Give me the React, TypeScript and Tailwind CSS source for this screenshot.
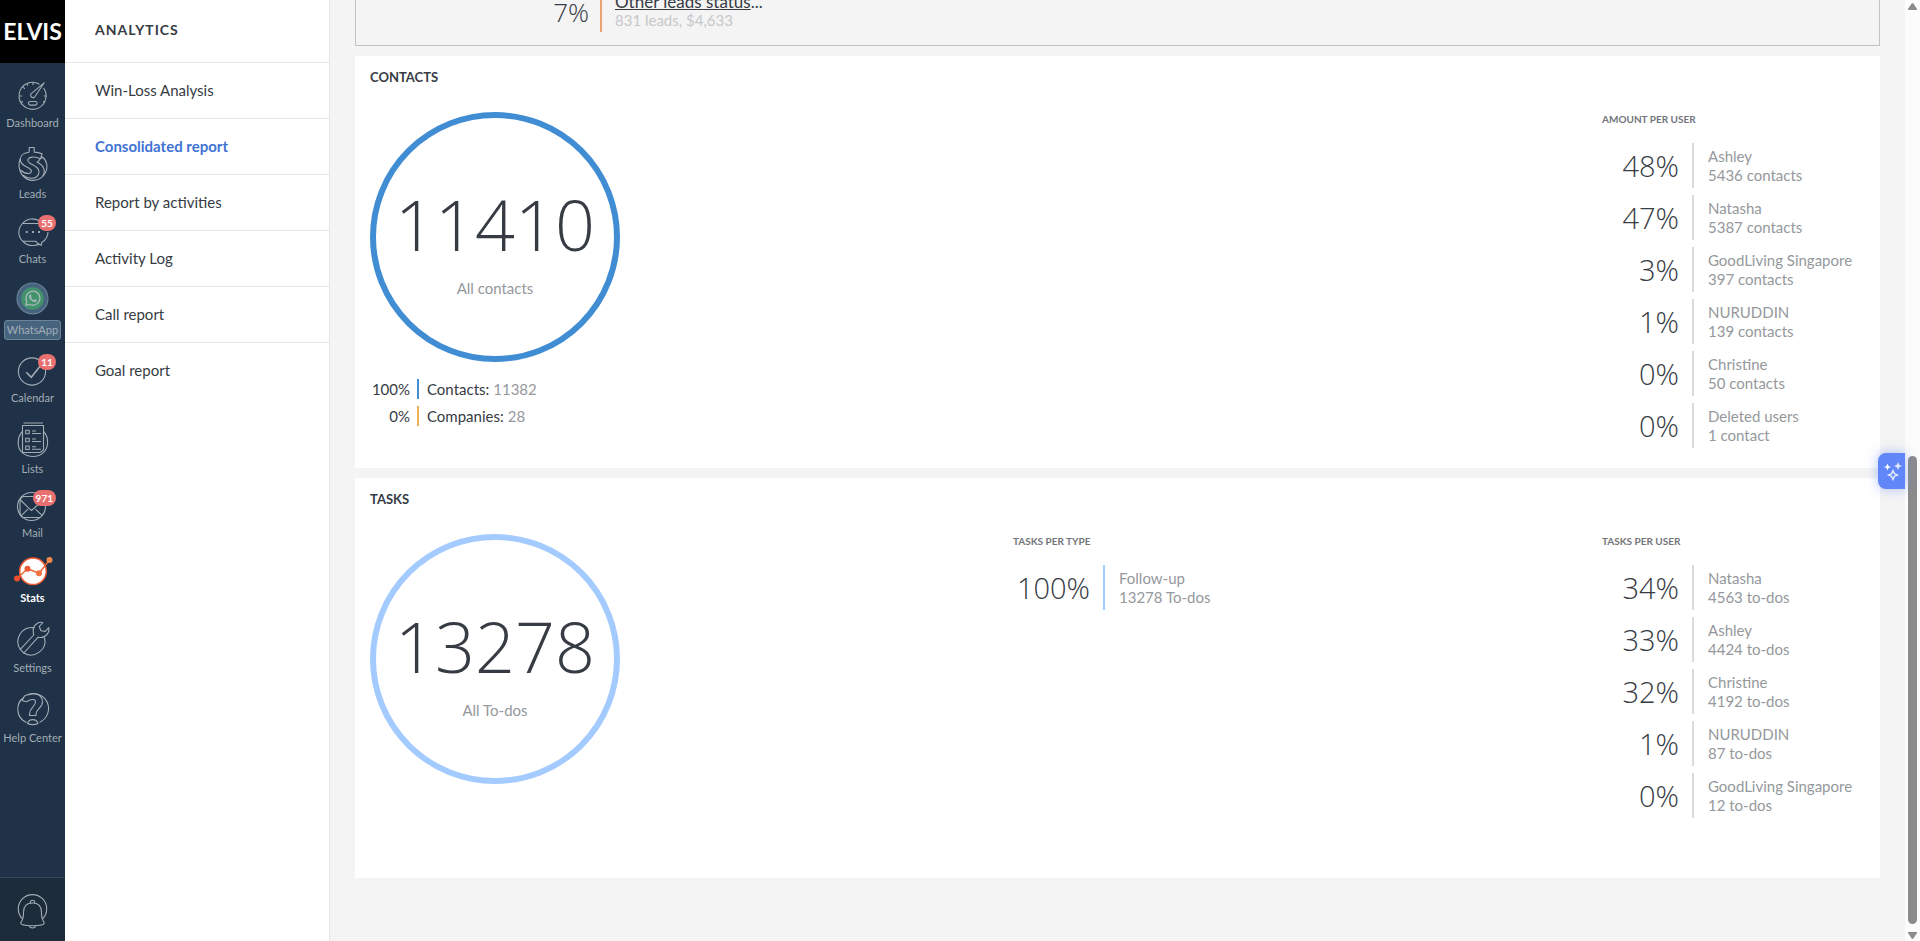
import type { ReactNode } from 'react'
import clsx from 'clsx'

type NavItem = {
  label: string
  icon: ReactNode
  badge?: string
  active?: boolean
  boxed?: boolean
}

type Stat = {
  percent: string
  name: string
  amount: string
}

function LineIcon({ height, children }: { height: number; children: ReactNode }) {
  return (
    <svg
      width="33"
      height={height}
      viewBox={`0 0 33 ${height}`}
      fill="none"
      stroke="currentColor"
      strokeWidth="1.1"
      strokeLinejoin="round"
      className="overflow-visible"
      aria-hidden="true"
    >
      {children}
    </svg>
  )
}

const icons = {
  dashboard: (
    <LineIcon height={29}>
      <path d="M23.5 3.2A13.5 13.5 0 1 0 27.6 7" />
      <path d="M28.2 1.8 15.2 12.6a2.4 2.4 0 1 0 3.6 3.2Z" />
      <rect x="12.5" y="20.5" width="8.5" height="3.6" rx="1.6" />
      <path d="M17 1.5v2.6M3.5 15h2.6M30.5 15h-2.6M7.2 6.2l1.6 1.6M5 21.5l2-1M29 21.5l-2-1M11 3l.8 1.8" />
    </LineIcon>
  ),
  leads: (
    <LineIcon height={34}>
      <path d="M13.2 5.2V.5h5v4.600c3 0 5.500.6 7.800 1.700l-1.500 5c-3-1.400-6-2-8.500-1.700-4.500.5-5.500 3.600-2.500 5.900 3.500 2.500 9.500 3.500 9.500 9 0 4-3.500 6.500-7.500 6.300-3.500-.1-6.500-1.300-9-3.300" />
      <path d="M13.200 5.200C8 5.700 4.300 8.500 4.300 12.500c0 5 4.700 6.500 8.700 8.700 4 2.300 2.500 5.300-.5 5.300-3 0-6-1.500-8.200-3.500" />
      <path d="M4.500 11C2 16.500 2.500 23.500 6.500 28.300c5.500 6.700 15.500 6.700 21 .2 5-6 4.500-13.500-1-18.500l-2 1.800" />
      <path d="M24 12c-.8 1.500-1.700 2.500-2.900 3.300 7 3 8.900 9 5.400 14.200" />
    </LineIcon>
  ),
  chats: (
    <LineIcon height={28}>
      <path d="M6.500 5.500C10.500.4 18.500-.8 24.500 3.500M32 14c0 5-2.800 8.400-6.500 10.700v2.600c-2.400-.4-4.500-1.800-5.700-4H7C9.800 26.500 13 27.700 17 27.500c2.500 0 5-.6 7-1.500" />
      <path d="M23 5.500H6.500C1.500 11 1.500 18.500 7 23.300" />
      <path d="M9.800 14h1.900M16.100 14H18M22.100 14H24" strokeWidth="2" />
    </LineIcon>
  ),
  whatsapp: (
    <LineIcon height={31}>
      <circle cx="16.500" cy="15.500" r="15.500" fill="#47647f" stroke="#6c8398" />
      <circle cx="16.500" cy="15.500" r="11.300" fill="#42936b" stroke="none" />
      <path d="m9.800 22.300 1-3.700a7 7 0 1 1 2.700 2.700Z" stroke="#a6b7b8" strokeWidth="1.300" />
      <path
        d="M13.600 11.900c.5-.6 1.200-.5 1.500.2l.5 1.200c.1.500-.7 1-.6 1.300.6 1.200 1.500 2.100 2.800 2.600.5.100.9-1.100 1.400-.9l1.500.8c.5.500-.1 1.700-1.100 2-3 .6-7.200-3.500-6.700-6 .1-.5.400-.9.700-1.200Z"
        fill="#a6b7b8"
        stroke="none"
      />
    </LineIcon>
  ),
  calendar: (
    <LineIcon height={28}>
      <circle cx="16" cy="14.500" r="13.600" />
      <path d="m10.300 15.300 5 5L25 8" strokeWidth="1.500" strokeLinejoin="miter" />
    </LineIcon>
  ),
  lists: (
    <LineIcon height={34}>
      <path d="M6.500 3.500h21v24.200c-1 1.200-2 2-3.400 2.800H6.500ZM7.500 1h19.500" />
      <path d="M6.500 9.500C.8 15 .8 26 6.300 30.600c6 5.200 15.500 5.200 21 0C33 25.500 33 15 27.500 9.500" />
      <path d="M9.700 8.300h3.500v3.500H9.700zM9.700 16.300h3.500v3.500H9.700zM9.700 24h3.500v3.500H9.700zM16 9h4M16 11.500h9M16 17h4M16 19.500h9M16 24.700h4M16 27.200h9" />
    </LineIcon>
  ),
  mail: (
    <LineIcon height={27}>
      <circle cx="15.500" cy="13.500" r="14" />
      <path d="M7 3.500h14M4.500 7l7 6.800M15.500 17.500 27 7M11.500 13.800l4 3.700M5.500 22.300l6.500-6.200M26 22.300l-6.600-6.200M7 24.500h17M7 3.500C4.500 5 4 6.500 4 8v12c0 2 1 3.500 3 4.500" />
    </LineIcon>
  ),
  stats: (
    <LineIcon height={28}>
      <circle cx="17" cy="14.300" r="13.300" fill="#fff" stroke="#ef5a35" strokeWidth="1.500" />
      <path d="m1 21.500 10.500-9.700L23 16.200 33.500 3" stroke="#f0683a" strokeWidth="1.500" />
      <circle cx="1" cy="21.500" r="3" fill="#f04e2e" stroke="none" />
      <circle cx="11.500" cy="11.800" r="3" fill="#f05a33" stroke="none" />
      <circle cx="23" cy="16.200" r="3" fill="#f17240" stroke="none" />
      <circle cx="33.500" cy="3" r="3" fill="#f28a4b" stroke="none" />
    </LineIcon>
  ),
  settings: (
    <LineIcon height={33}>
      <path d="M17 5.600A14 14 0 0 0 4.300 27.400M28.500 15.500A14 14 0 0 1 7.800 31M17.500 5.600l1.200-.1" />
      <path d="M4.300 27.400 17.700 13c-1.200-4.700-.2-9.500 4-12 2-.9 3.600-.9 5.100-.5l-3.500 4 1.600 4.300 4.400.6 3.400-3.700c.6 2.400-.3 5.400-2.200 7.300-2.300 2.300-5.400 3-8.300 2.200L7.800 31Z" />
    </LineIcon>
  ),
  help: (
    <LineIcon height={33}>
      <path d="M10.500 30.500A14.500 14.500 0 0 1 8 5.300M12 2.900a14.500 14.500 0 1 1 11.500 27.300" />
      <path d="M6 8.500 8.500 4l3.500-1.500c8-2.500 14.500.5 14.500 7.500 0 5.500-6.500 7-6.500 12v1.500h-6.500V22c0-6.500 6-7.500 6-12 0-3-4-3.500-9-.2Z" />
      <path d="M11.500 31.500a5.500 5.500 0 0 1 10.500 0c-3 1.300-7.500 1.300-10.500 0Z" />
    </LineIcon>
  ),
  bell: (
    <LineIcon height={35}>
      <path d="M6.300 24.700a14.200 14.200 0 1 1 20.400 0" />
      <path d="M16.500 9c-6 0-8.700 3.800-8.900 8.500-.2 6.500-.6 7.500-2.900 11.500 0 1.800 5.600 2.700 11.800 2.700s11.800-.9 11.800-2.700c-2.300-4-2.700-5-2.900-11.500C25.200 12.800 22.500 9 16.500 9ZM14.300 9.200a2.300 2.300 0 1 1 4.400 0M13 31.700a3.800 3.800 0 0 0 7 0" />
    </LineIcon>
  ),
}

const navItems: NavItem[] = [
  { label: 'Dashboard', icon: icons.dashboard },
  { label: 'Leads', icon: icons.leads },
  { label: 'Chats', icon: icons.chats, badge: '55' },
  { label: 'WhatsApp', icon: icons.whatsapp, boxed: true },
  { label: 'Calendar', icon: icons.calendar, badge: '11' },
  { label: 'Lists', icon: icons.lists },
  { label: 'Mail', icon: icons.mail, badge: '971' },
  { label: 'Stats', icon: icons.stats, active: true },
  { label: 'Settings', icon: icons.settings },
  { label: 'Help Center', icon: icons.help },
]

const reports = [
  'Win-Loss Analysis',
  'Consolidated report',
  'Report by activities',
  'Activity Log',
  'Call report',
  'Goal report',
]

const contactsPerUser: Stat[] = [
  { percent: '48%', name: 'Ashley', amount: '5436 contacts' },
  { percent: '47%', name: 'Natasha', amount: '5387 contacts' },
  { percent: '3%', name: 'GoodLiving Singapore', amount: '397 contacts' },
  { percent: '1%', name: 'NURUDDIN', amount: '139 contacts' },
  { percent: '0%', name: 'Christine', amount: '50 contacts' },
  { percent: '0%', name: 'Deleted users', amount: '1 contact' },
]

const tasksPerType: Stat[] = [
  { percent: '100%', name: 'Follow-up', amount: '13278 To-dos' },
]

const tasksPerUser: Stat[] = [
  { percent: '34%', name: 'Natasha', amount: '4563 to-dos' },
  { percent: '33%', name: 'Ashley', amount: '4424 to-dos' },
  { percent: '32%', name: 'Christine', amount: '4192 to-dos' },
  { percent: '1%', name: 'NURUDDIN', amount: '87 to-dos' },
  { percent: '0%', name: 'GoodLiving Singapore', amount: '12 to-dos' },
]

function NavRail() {
  return (
    <nav className="flex w-[65px] shrink-0 flex-col bg-[#203247] text-[#a3adb6]">
      <a
        href="#home"
        className="flex h-[63px] items-center justify-center bg-black text-[23px] font-bold text-white"
      >
        ELVIS
      </a>
      <ul className="flex flex-col gap-[17px] pt-[18px]">
        {navItems.map((item) => (
          <li key={item.label}>
            <a
              href={`#${item.label}`}
              className="flex flex-col items-center gap-1.5 text-[11px] leading-[14px] whitespace-nowrap"
            >
              <span className="relative">
                {item.icon}
                {item.badge && (
                  <span className="absolute -top-[3px] -right-[7px] flex h-4 min-w-[18px] items-center justify-center rounded-full bg-[#e97070] px-[3px] text-[10px] font-bold text-white">
                    {item.badge}
                  </span>
                )}
              </span>
              <span
                className={clsx(
                  item.active && 'font-bold text-white',
                  item.boxed &&
                    'rounded-[3px] border border-[#6c8398] bg-[#47647f] px-0.5 py-0.5',
                )}
              >
                {item.label}
              </span>
            </a>
          </li>
        ))}
      </ul>
      <button
        type="button"
        aria-label="Notifications"
        className="mt-auto flex h-16 items-center justify-center border-t border-[#2c4a58] bg-[#1d2c3a] pt-1"
      >
        {icons.bell}
      </button>
    </nav>
  )
}

function ReportMenu() {
  return (
    <aside className="w-[265px] shrink-0 border-r border-[#e5e6e7] bg-white text-[#363b44]">
      <h1 className="flex h-[62px] items-center pb-0.5 pl-[30px] text-sm font-bold tracking-[1px]">
        ANALYTICS
      </h1>
      <ul>
        {reports.map((report) => (
          <li key={report} className="border-t border-[#e5e6e7]">
            <a
              href={`#${report}`}
              className={clsx(
                'flex h-[55px] items-center pl-[30px]',
                report === 'Consolidated report' && 'font-bold text-[#3f73d3]',
              )}
            >
              {report}
            </a>
          </li>
        ))}
      </ul>
    </aside>
  )
}

function StatList({
  title,
  stats,
  className,
  barClassName = 'border-[#dadbdd]',
}: {
  title: string
  stats: Stat[]
  className: string
  barClassName?: string
}) {
  return (
    <div className={className}>
      <h3 className="text-[10px] leading-[14px] font-bold text-[#72757b]">{title}</h3>
      <ul className="mt-[17px] flex flex-col gap-[7px]">
        {stats.map((stat) => (
          <li key={stat.name} className="flex h-[45px] items-center whitespace-nowrap">
            <span className="w-[77px] shrink-0 text-right font-['Open_Sans',sans-serif] text-[29px] leading-9 font-light text-[#363b44]">
              {stat.percent}
            </span>
            <div
              className={clsx(
                'ml-[13px] flex h-full flex-col justify-center border-l-2 pl-3.5 leading-[19px] text-[#95989c]',
                barClassName,
              )}
            >
              <span>{stat.name}</span>
              <span>{stat.amount}</span>
            </div>
          </li>
        ))}
      </ul>
    </div>
  )
}

function TotalCircle({
  total,
  label,
  className,
}: {
  total: string
  label: string
  className: string
}) {
  return (
    <div
      className={clsx(
        'flex size-[250px] flex-col items-center rounded-full border-[6px] pt-[66px]',
        className,
      )}
    >
      <span className="font-['Open_Sans',sans-serif] text-[70px] leading-[80px] font-light text-[#363b44]">
        {total}
      </span>
      <span className="mt-3.5 leading-5 text-[#95989c]">{label}</span>
    </div>
  )
}

function LegendRow({
  percent,
  label,
  value,
  barClassName,
}: {
  percent: string
  label: string
  value: string
  barClassName: string
}) {
  return (
    <li className="flex h-5 items-center leading-5 text-[#363b44]">
      <span className="w-10 text-right">{percent}</span>
      <span className={clsx('ml-[7px] border-l-2 pl-2', barClassName)}>{label}</span>
      <span className="ml-1 text-[#95989c]">{value}</span>
    </li>
  )
}

function LeadsPanel() {
  return (
    <section className="flex h-[46px] flex-col justify-end overflow-hidden border border-t-0 border-[#c0c2c4] pb-[13px] pl-[197px]">
      <div className="flex h-[45px] shrink-0">
        <span className="flex w-9 items-center justify-end pt-1.5 font-['Open_Sans',sans-serif] text-[26px] font-light text-[#363b44]">
          7%
        </span>
        <div className="ml-[11px] flex flex-col justify-center border-l-2 border-[#e8a273] pt-0.5 pl-[13px] leading-[19px]">
          <span className="text-[17px] text-[#363b44]">
            <a href="#leads" className="underline">
              Other leads status
            </a>
            ...
          </span>
          <span className="text-[#c6c8ca]">831 leads, $4,633</span>
        </div>
      </div>
    </section>
  )
}

function AssistantButton() {
  return (
    <button
      type="button"
      aria-label="Assistant"
      className="absolute top-[453px] right-[15px] flex h-9 w-[27px] items-center justify-center rounded-l-lg bg-[#6186f8] pl-0.5 shadow-[0_0_12px_rgba(97,134,248,0.5)]"
    >
      <svg width="18" height="20" viewBox="0 0 18 20" fill="#fff" aria-hidden="true">
        <path d="M3.500 2.500 4.500 5l2.500 1-2.500 1-1 2.500-1-2.500L0 6l2.500-1Z" />
        <path d="m14 1 1.200 2.800L18 5l-2.800 1.200L14 9l-1.200-2.800L10 5l2.800-1.200Z" opacity=".8" />
        <path
          d="m9 9.500 1.400 3.100 3.100 1.400-3.100 1.400L9 18.500l-1.400-3.100L4.500 14l3.100-1.400Z"
          fill="none"
          stroke="#e3eafe"
          strokeWidth="1.400"
        />
      </svg>
    </button>
  )
}

function ScrollTrack() {
  return (
    <div className="flex w-[15px] shrink-0 flex-col items-center bg-[#fcfcfc] pt-[3px] pb-0.5">
      <svg width="9" height="7" viewBox="0 0 9 7" fill="#8b8b8b" aria-hidden="true">
        <path d="M3.800.3h1.400L9 6v1H0V6Z" />
      </svg>
      <div className="mt-auto mb-2 h-[468px] w-[9px] rounded-full bg-[#8b8b8b]" />
      <svg width="9" height="7" viewBox="0 0 9 7" fill="#8b8b8b" aria-hidden="true">
        <path d="M3.800 6.700h1.400L9 1V0H0v1Z" />
      </svg>
    </div>
  )
}

export default function App() {
  return (
    <div className="relative flex min-h-screen bg-[#f4f4f4] font-['Lato',sans-serif] text-[15px]">
      <NavRail />
      <ReportMenu />
      <main className="flex min-w-0 flex-1 flex-col gap-2.5 px-[25px]">
        <LeadsPanel />
        <section className="bg-white px-[15px] pt-3 pb-5">
          <h2 className="text-[13px] leading-[18px] font-bold text-[#363b44]">CONTACTS</h2>
          <div className="mt-[26px] flex justify-between">
            <div>
              <TotalCircle total="11410" label="All contacts" className="border-[#418dd3]" />
              <ul className="mt-[17px] flex flex-col gap-[7px]">
                <LegendRow percent="100%" label="Contacts:" value="11382" barClassName="border-[#418dd3]" />
                <LegendRow percent="0%" label="Companies:" value="28" barClassName="border-[#eeb05a]" />
              </ul>
            </div>
            <StatList title="AMOUNT PER USER" stats={contactsPerUser} className="w-[263px]" />
          </div>
        </section>
        <section className="bg-white px-[15px] pt-3 pb-[60px]">
          <h2 className="text-[13px] leading-[18px] font-bold text-[#363b44]">TASKS</h2>
          <div className="mt-[26px] flex justify-between">
            <TotalCircle total="13278" label="All To-dos" className="border-[#a3cbff]" />
            <StatList
              title="TASKS PER TYPE"
              stats={tasksPerType}
              className="w-[196px]"
              barClassName="border-[#a3cbff]"
            />
            <StatList title="TASKS PER USER" stats={tasksPerUser} className="w-[263px]" />
          </div>
        </section>
      </main>
      <ScrollTrack />
      <AssistantButton />
    </div>
  )
}
